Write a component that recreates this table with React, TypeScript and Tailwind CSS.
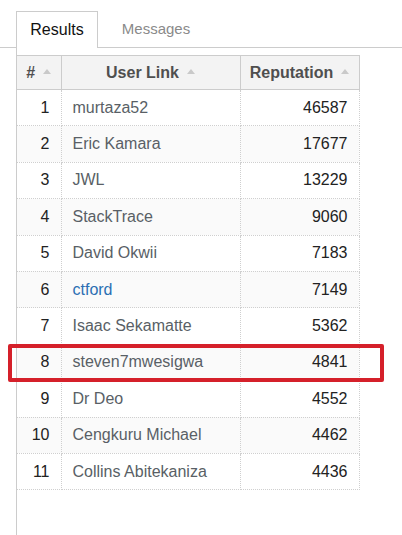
import React from "react";

interface Row {
  rank: number;
  name: string;
  rep: number;
  link?: boolean;
}

const rows: Row[] = [
  { rank: 1, name: "murtaza52", rep: 46587 },
  { rank: 2, name: "Eric Kamara", rep: 17677 },
  { rank: 3, name: "JWL", rep: 13229 },
  { rank: 4, name: "StackTrace", rep: 9060 },
  { rank: 5, name: "David Okwii", rep: 7183 },
  { rank: 6, name: "ctford", rep: 7149, link: true },
  { rank: 7, name: "Isaac Sekamatte", rep: 5362 },
  { rank: 8, name: "steven7mwesigwa", rep: 4841 },
  { rank: 9, name: "Dr Deo", rep: 4552 },
  { rank: 10, name: "Cengkuru Michael", rep: 4462 },
  { rank: 11, name: "Collins Abitekaniza", rep: 4436 },
];

// little sort arrow in the header
const SortUp = () => (
  <svg width="8" height="5" viewBox="0 0 8 5" className="inline-block ml-[8px] mb-[3px]">
    <path d="M0 5 L4 0 L8 5 Z" fill="#c9c9c9" />
  </svg>
);

const cellBorder = `border-[#cfcfcf] border-dotted`;

export default function App() {
  return (
    <div
      className="relative w-[402px] h-[535px] overflow-hidden bg-white"
      style={{ fontFamily: '"Liberation Sans", Arial, sans-serif' }}
    >
      {/* tabs */}
      <div className="flex items-end pt-[11px] pl-[16px] border-b border-[#cccccc] h-[48px]">
        <div className="w-[82px] h-[37px] -mb-px bg-white border border-b-0 border-[#cccccc] flex items-center justify-center text-[16px] text-[#111]">
          Results
        </div>
        <div className="w-[116px] h-[36px] flex items-center justify-center text-[15px] text-[#8a8a8a]">
          Messages
        </div>
      </div>

      {/* panel */}
      <div className="ml-[16px] border-l border-[#cccccc] h-full pt-[7px]">
        <table className="border-collapse text-[16px]">
          <thead>
            <tr className="bg-[#f3f3f3] h-[34px]">
              <th className="w-[44px] border border-l-0 border-[#cccccc] font-bold text-[#4f4f4f] text-center">
                #<SortUp />
              </th>
              <th className="w-[179px] border border-[#cccccc] font-bold text-[#4f4f4f] text-center">
                User Link<SortUp />
              </th>
              <th className="w-[119px] border border-[#cccccc] font-bold text-[#4f4f4f] text-center">
                Reputation<SortUp />
              </th>
            </tr>
          </thead>
          <tbody>
            {rows.map((r) => (
              <tr key={r.rank} className={`h-[36.4px] ${r.rank % 2 === 0 ? "bg-[#fafafa]" : "bg-white"}`}>
                <td className={`border border-l-0 ${cellBorder} text-right pr-[11px] text-[#222]`}>{r.rank}</td>
                <td
                  className={`border ${cellBorder} text-left pl-[11px] ${r.link ? "text-[#2b6fb3]" : "text-[#595f66]"}`}
                >
                  {r.name}
                </td>
                <td className={`border ${cellBorder} text-right pr-[11px] text-[#222]`}>{r.rep}</td>
              </tr>
            ))}
          </tbody>
        </table>
      </div>

      {/* red highlight drawn over row 8 */}
      <div className="absolute left-[8px] top-[344px] w-[376px] h-[38px] border-[4px] border-[#d5202a] rounded-[2px]" />
    </div>
  );
}
